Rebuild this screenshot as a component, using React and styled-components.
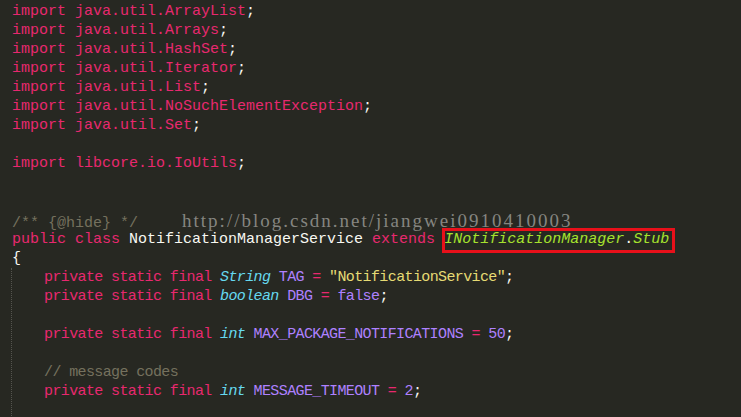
import React from "react"
import styled, { createGlobalStyle } from "styled-components"

const COLORS = {
  bg: "#272822",
  plain: "#f8f8f2",
  keyword: "#e8286f",
  comment: "#75715e",
  type: "#66d9ef",
  constant: "#ae81ff",
  string: "#e6db74",
  inherit: "#a6e22e",
  guide: "#55554f",
  mark: "#e8101a",
}

const GlobalStyle = createGlobalStyle`
  html, body {
    margin: 0;
    padding: 0;
    background: ${COLORS.bg};
  }
`

const IMPORTS = [
  "java.util.ArrayList",
  "java.util.Arrays",
  "java.util.HashSet",
  "java.util.Iterator",
  "java.util.List",
  "java.util.NoSuchElementException",
  "java.util.Set",
]

const App = () => (
  <>
    <GlobalStyle />
    <Editor>
      {IMPORTS.map((name) => (
        <Line key={name}>
          <Tok $kind="keyword">import</Tok> <Tok $kind="keyword">{name}</Tok>;
        </Line>
      ))}
      <Line />
      <Line>
        <Tok $kind="keyword">import</Tok> <Tok $kind="keyword">libcore.io.IoUtils</Tok>;
      </Line>
      <Line />
      <Line />
      <Line>
        <Tok $kind="comment">/** {"{@hide}"} */</Tok>
        <Watermark>http://blog.csdn.net/jiangwei0910410003</Watermark>
      </Line>
      <Line>
        <Tok $kind="keyword">public</Tok> <Tok $kind="keyword">class</Tok> NotificationManagerService{" "}
        <Tok $kind="keyword">extends</Tok>{" "}
        <Highlight>
          <Tok $kind="inherit">INotificationManager</Tok>.<Tok $kind="inherit">Stub</Tok>
        </Highlight>
      </Line>
      <Line>{"{"}</Line>
      <Block>
        <Line>
          <Mods /> <Tok $kind="type">String</Tok> <Tok $kind="constant">TAG</Tok>{" "}
          <Tok $kind="keyword">=</Tok> <Tok $kind="string">"NotificationService"</Tok>;
        </Line>
        <Line>
          <Mods /> <Tok $kind="type">boolean</Tok> <Tok $kind="constant">DBG</Tok>{" "}
          <Tok $kind="keyword">=</Tok> <Tok $kind="constant">false</Tok>;
        </Line>
        <Line />
        <Line>
          <Mods /> <Tok $kind="type">int</Tok> <Tok $kind="constant">MAX_PACKAGE_NOTIFICATIONS</Tok>{" "}
          <Tok $kind="keyword">=</Tok> <Tok $kind="constant">50</Tok>;
        </Line>
        <Line />
        <Line>
          <Tok $kind="comment">// message codes</Tok>
        </Line>
        <Line>
          <Mods /> <Tok $kind="type">int</Tok> <Tok $kind="constant">MESSAGE_TIMEOUT</Tok>{" "}
          <Tok $kind="keyword">=</Tok> <Tok $kind="constant">2</Tok>;
        </Line>
        <Line />
      </Block>
    </Editor>
  </>
)

const Mods = () => (
  <>
    <Tok $kind="keyword">private</Tok> <Tok $kind="keyword">static</Tok> <Tok $kind="keyword">final</Tok>
  </>
)

export default App

const Editor = styled.div`
  width: 741px;
  height: 417px;
  overflow: hidden;
  box-sizing: border-box;
  padding: 2px 0 0 12px;
  background: ${COLORS.bg};
  color: ${COLORS.plain};
  font-family: "Liberation Mono", "DejaVu Sans Mono", monospace;
  font-size: 15px;
`

const Line = styled.div`
  height: 19px;
  line-height: 19px;
  white-space: pre;
`

const Tok = styled.span`
  color: ${(props) => COLORS[props.$kind]};
  font-style: ${(props) =>
    props.$kind === "type" || props.$kind === "inherit" ? "italic" : "normal"};
`

const Block = styled.div`
  margin-left: -1px;
  padding-left: 32px;
  border-left: 1px dotted ${COLORS.guide};
  letter-spacing: -0.62px;
`

const Watermark = styled.span`
  margin-left: 44px;
  font-family: "Liberation Serif", "DejaVu Serif", serif;
  font-size: 19px;
  letter-spacing: 2px;
  color: #858580;
`

const Highlight = styled.span`
  position: relative;

  &::after {
    content: "";
    position: absolute;
    left: -2px;
    right: -6px;
    top: -3px;
    bottom: -5px;
    border: 3px solid ${COLORS.mark};
  }
`
